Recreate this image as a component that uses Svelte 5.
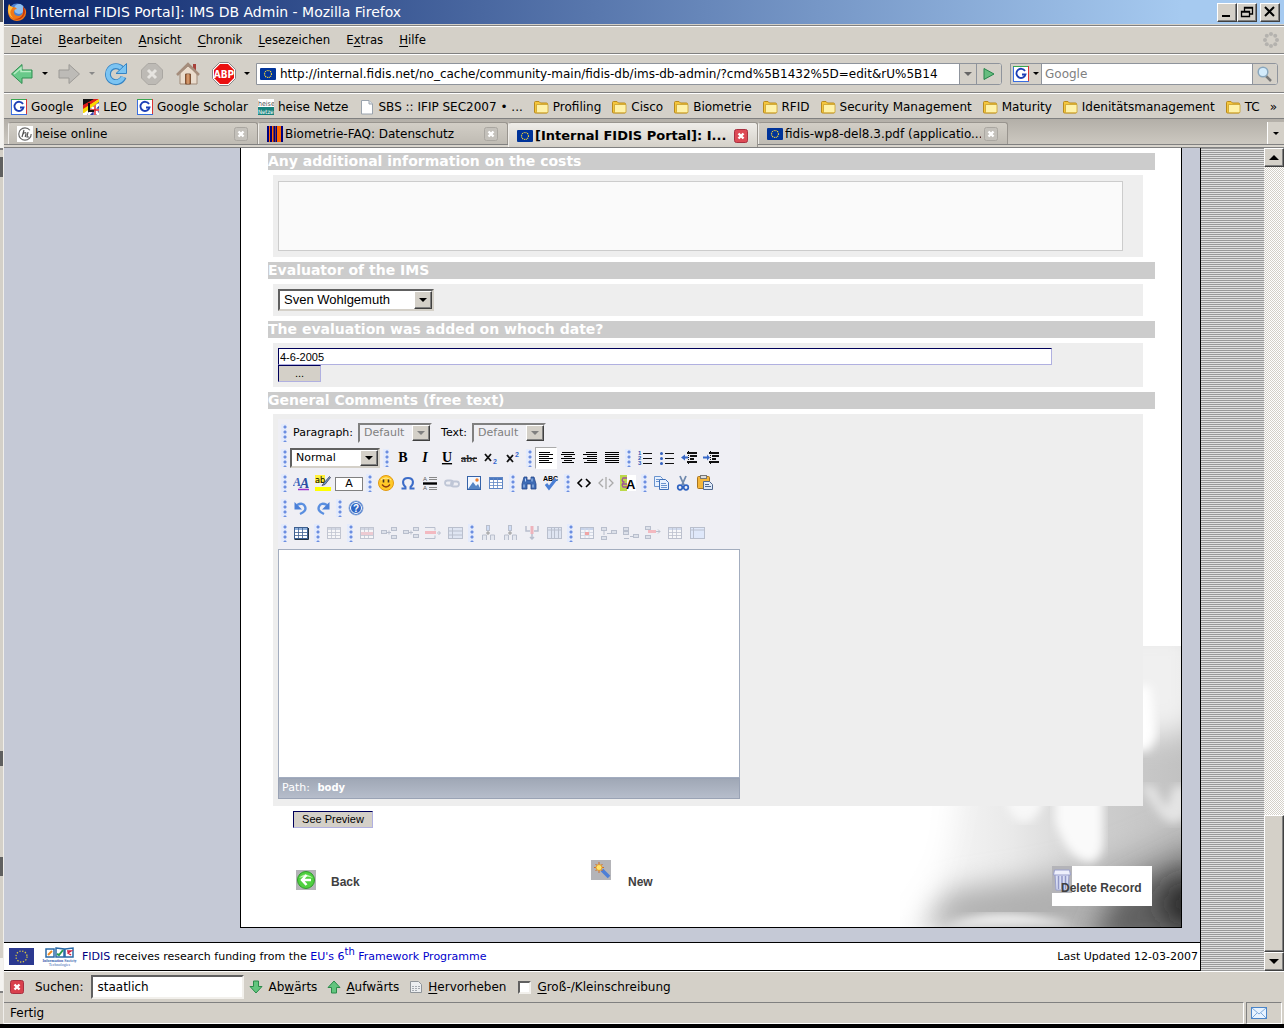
<script>
  const eu = '<rect x="0" y="2" width="16" height="12" rx="1" fill="#003399"/><circle cx="8" cy="8" r="3.5" fill="none" stroke="#ffdd33" stroke-width="1.2" stroke-dasharray="1 0.84"/>';
  const folder = '<path d="M1.500 3.500q0-1 1-1h3.500l1.500 1.500h6q1 0 1 1v8q0 1-1 1h-11q-1 0-1-1z" fill="#f5c63c" stroke="#b98a1b"/><path d="M3.500 5.500h11.500v7.500q0 .8-1 .8h-9.500q-1 0-1-1z" fill="#fff2a8" stroke="#c9a02c" stroke-width=".8"/>';
  const google = '<rect x=".5" y=".5" width="15" height="15" fill="#fff" stroke="#3a6ee0"/><path d="M0 .5h16" stroke="#3aa650"/><path d="M15.500 0v16" stroke="#d33"/><path d="M0 15.500h16" stroke="#3a6ee0"/><path d="M12 5A4.600 4.600 0 1 0 12.500 8.500H9" fill="none" stroke="#1d3fb5" stroke-width="1.800"/>';
  const leo = '<rect width="16" height="16" fill="#fff"/><path d="M8 8l8-6v14H4z" fill="#3340a8"/><path d="M12 3v13M5 11h11M8 7l8 9M16 5L5 16" stroke="#fff" stroke-width="2.600"/><path d="M12 4v12M6 11h10" stroke="#d8202a" stroke-width="1.400"/><path d="M0 0h12L0 7z" fill="#111"/><path d="M0 6L11 0h5L0 11z" fill="#e01b1b"/><path d="M0 10L16 0v3L1 14H0z" fill="#f8d800"/><path d="M6 4v8h5" fill="none" stroke="#111" stroke-width="2"/>';
  const heise = '<rect width="16" height="16" fill="#fff"/><text x="0" y="7" font-size="7" font-family="DejaVu Sans Condensed" fill="#555">heise</text><rect y="8" width="16" height="8" fill="#16827c"/><text x="0" y="15" font-size="6" font-family="DejaVu Sans Condensed" fill="#fff">Netze</text>';
  const page = '<path d="M2.500 1.500h7.500l3.500 3.500v10h-11z" fill="#fff" stroke="#9aa3ad"/><path d="M10 1.500v3.500h3.500" fill="#dfe6ee" stroke="#9aa3ad"/>';
  const atIcon = '<rect width="16" height="16" fill="#fff"/><circle cx="8" cy="8" r="6.200" fill="none" stroke="#666" stroke-width="1.200" stroke-dasharray="34 5"/><path d="M7 4L5 11M6 8q3-3 3 0l-.8 3M11 6l-1 5h2" fill="none" stroke="#555" stroke-width="1.200"/>';
  const bars = '<rect width="16" height="16" fill="#f60"/><path d="M1 0v16M4 0v16M7.500 0v16" stroke="#000080" stroke-width="2"/><path d="M9.500 0v16" stroke="#000080"/><path d="M15 0v16" stroke="#000080" stroke-width="2"/>';
  const close = (a, b) => `<rect x="1.500" y="1.500" width="13" height="13" rx="2" fill="${a}" stroke="${b}"/><path d="M5.500 5.500l5 5m0-5l-5 5" stroke="#fff" stroke-width="2.400"/>`;

  const menus = [['', 'D', 'atei'], ['', 'B', 'earbeiten'], ['', 'A', 'nsicht'], ['', 'C', 'hronik'], ['', 'L', 'esezeichen'], ['E', 'x', 'tras'], ['', 'H', 'ilfe']];
  const bookmarks = [
    [google, 'Google'], [leo, 'LEO'], [google, 'Google Scholar'], [heise, 'heise Netze'], [page, 'SBS :: IFIP SEC2007 • ...'],
    [folder, 'Profiling'], [folder, 'Cisco'], [folder, 'Biometrie'], [folder, 'RFID'], [folder, 'Security Management'],
    [folder, 'Maturity'], [folder, 'Idenitätsmanagement'], [folder, 'TC']
  ];
  const tabs = [
    { icon: atIcon, label: 'heise online' },
    { icon: bars, label: 'Biometrie-FAQ: Datenschutz' },
    { icon: eu, label: '[Internal FIDIS Portal]: I...', active: true },
    { icon: eu, label: 'fidis-wp8-del8.3.pdf (applicatio...' }
  ];

  const lines = (rows) => rows.map(([x1, x2], i) => `M${x1} ${2.5 + i * 2}H${x2}`).join('');
  const L = (rows) => `<path d="${lines(rows)}" stroke="#000"/>`;
  const grid = (stroke, fill, extra = '') => `<rect x="1.500" y="2.500" width="13" height="11" fill="#fff" stroke="${stroke}"/><rect x="2" y="3" width="12" height="2" fill="${fill}"/><path d="M2 7.500h12M2 10.500h12M5.500 3v10M9.500 3v10" stroke="${stroke}" stroke-width=".8"/>${extra}`;
  const T = (t, a) => `<text x="8" y="12" text-anchor="middle" font-family="Liberation Serif, serif" font-weight="bold" font-size="14" ${a}>${t}</text>`;
  const g = '#b9bfcd';
  const cell = (x, y) => `<rect x="${x}.500" y="${y}.500" width="5" height="3" fill="#dde1ea" stroke="${g}"/>`;
  const icons = {
    bold: T('B', ''), italic: T('I', 'font-style="italic"'), underline: T('U', 'text-decoration="underline"'),
    strike: '<text x="8" y="12" text-anchor="middle" font-family="Liberation Serif, serif" font-weight="bold" font-size="11" fill="#333">abc</text><path d="M0 8.500h16" stroke="#222"/>',
    sub: '<path d="M2 4l6 7M8 4l-6 7" stroke="#111" stroke-width="1.800"/><text x="10" y="14" font-size="7" font-weight="bold" font-family="Liberation Sans" fill="#36c">2</text>',
    sup: '<path d="M2 5l6 7M8 5l-6 7" stroke="#111" stroke-width="1.800"/><text x="10" y="7" font-size="7" font-weight="bold" font-family="Liberation Sans" fill="#36c">2</text>',
    left: L([[1, 12], [1, 15], [1, 11], [1, 15], [1, 11], [1, 14]]), center: L([[2, 14], [1, 15], [4, 12], [1, 15], [4, 12], [2, 14]]),
    right: L([[4, 15], [1, 15], [5, 15], [1, 15], [5, 15], [2, 15]]), justify: L([[1, 15], [1, 15], [1, 15], [1, 15], [1, 15], [1, 15]]),
    ol: '<path d="M6 3.500h9M6 8.500h9M6 13.500h9" stroke="#111"/><g font-size="6" font-weight="bold" font-family="Liberation Sans" fill="#2b55b5"><text x="1" y="5">1</text><text x="1" y="10">2</text><text x="1" y="15">3</text></g>',
    ul: '<path d="M6 3.500h9M6 8.500h9M6 13.500h9" stroke="#111"/><g fill="#3461bf"><circle cx="2.500" cy="3.500" r="1.500"/><circle cx="2.500" cy="8.500" r="1.500"/><circle cx="2.500" cy="13.500" r="1.500"/></g>',
    outdent: '<path d="M6 3h10M9 6h7M9 9h4M6 12h10" stroke="#111" stroke-width="2"/><path d="M7.500 1v14" stroke="#111" stroke-dasharray="1 1"/><path d="M0 7.500l4-3v2h3v2H4v2z" fill="#3768c8"/>',
    indent: '<path d="M6 3h10M9 6h7M9 9h4M6 12h10" stroke="#111" stroke-width="2"/><path d="M7.500 1v14" stroke="#111" stroke-dasharray="1 1"/><path d="M7 7.500l-3-3v2H0v2h4v2z" fill="#3768c8"/>',
    color: '<text x="0" y="11" font-size="12" font-style="italic" font-weight="bold" font-family="Liberation Serif" fill="#3a62b8">A</text><text x="7" y="13" font-size="14" font-style="italic" font-weight="bold" font-family="Liberation Serif" fill="#2a4fa3">A</text><path d="M5 14.500h11" stroke="#93c" stroke-width="1.500"/>',
    highlight: '<rect width="10" height="8" fill="#ffef3a"/><text x="0" y="8" font-size="9" font-family="DejaVu Sans Condensed">ab</text><path d="M14.500 1.500l-6 7-1.500 2 3-1 5.500-7z" fill="#6a97d4" stroke="#445" stroke-width=".8"/><rect y="12" width="16" height="4" fill="#ff0"/>',
    smiley: '<circle cx="8" cy="8" r="7.500" fill="#ffc928" stroke="#e39a12"/><path d="M3 5q5-4 10 0" stroke="#fff0a0" fill="none"/><path d="M5.500 4.500v3M10.500 4.500v3" stroke="#432" stroke-width="1.600"/><path d="M4 9.500q4 5 8 0" stroke="#8a3a10" fill="none" stroke-width="1.300"/>',
    omega: '<path d="M1.500 13.500h4v-1.500C2 9 1.800 3 8 3s6 6 2.500 9v1.500h4" fill="none" stroke="#3c6cc8" stroke-width="2"/>',
    hr: '<path d="M1 8.500h14" stroke="#000" stroke-width="2.400"/><path d="M7 2.500h8M7 4.500h8M7 12.500h8M7 14.500h8" stroke="#888"/><g font-size="6" font-family="Liberation Sans" fill="#555"><text x="1" y="6">A</text><text x="1" y="15">A</text></g>',
    link: '<g fill="none" stroke="#bfc6d6" stroke-width="1.800"><rect x="1" y="5.500" width="8" height="5" rx="2.500"/><rect x="7" y="6.500" width="8" height="5" rx="2.500"/></g>',
    image: '<rect x="1.500" y="1.500" width="13" height="13" fill="#f2f7ff" stroke="#3562a8"/><path d="M2 14L7 7l3 4 2-2 2.500 5z" fill="#5585c4"/><circle cx="11" cy="5" r="1.700" fill="#f08030"/>',
    table: grid('#5f86c4', '#4b78c0'), tableOn: grid('#3d6090', '#8fb1dd', '<path d="M1.500 14.500h14V3" fill="none" stroke="#234"/>'), tableOff: `<g opacity=".45">${grid('#8a93a8', '#b0bbd0')}</g>`,
    find: '<path d="M3 2h3v3h4V2h3l2 7v5h-5V9H6v5H1V9z" fill="#3d6bb5" stroke="#27488a" stroke-width=".8"/><path d="M3 9.500v3M12 9.500v3M4.500 3.500v3M11 3.500v3" stroke="#b9d3f6"/>',
    spell: '<text x="0" y="6" font-size="7" font-weight="bold" font-family="Liberation Sans">ABC</text><path d="M3 9l3 4 7-9" fill="none" stroke="#4a7fd6" stroke-width="3"/>',
    code: '<path d="M6 4L2 8l4 4M10 4l4 4-4 4" fill="none" stroke="#000" stroke-width="1.600"/>',
    codeOff: '<path d="M5 4L1 8l4 4M11 4l4 4-4 4M8 2v12" fill="none" stroke="#aaa" stroke-width="1.300"/>',
    style: '<rect width="7" height="16" fill="#bcd94a"/><rect x="7" width="9" height="16" fill="#fff"/><text x="6" y="14" font-size="13" font-weight="bold" font-family="Liberation Sans">A</text><path d="M7 3H3q-2 3 1 4-3 2-1 5h4M2 9h5" fill="none" stroke="#a0529a" stroke-width="1.300"/>',
    copy: '<path d="M1.500 1.500h6l2 2v8h-8z" fill="#e8f1fe" stroke="#6a94cf"/><path d="M6.500 4.500h6l3 3v7h-9z" fill="#e8f1fe" stroke="#3f70b8"/><path d="M3 4.500h3M3 6.500h3M8 8.500h5M8 10.500h6M8 12.500h6" stroke="#6a94cf"/>',
    cut: '<path d="M5 1l4 9M11 1L7 10" stroke="#6f89ad" stroke-width="1.800"/><circle cx="5" cy="12.500" r="2.300" fill="none" stroke="#2e62c0" stroke-width="1.700"/><circle cx="11" cy="12.500" r="2.300" fill="none" stroke="#2e62c0" stroke-width="1.700"/>',
    paste: '<rect x=".5" y="1.500" width="12" height="12" rx="1" fill="#f4b63a" stroke="#a87420"/><rect x="3.500" y=".5" width="6" height="3" fill="#ddd" stroke="#777"/><path d="M6.500 6.500h6l3 3v5h-9z" fill="#dfe9f8" stroke="#50688f"/><path d="M8 9.500h4M8 11.500h6" stroke="#50688f"/>',
    undo: '<path d="M7 14q7-3 5-7.500T4 5" fill="none" stroke="#5a8fe0" stroke-width="2.400"/><path d="M1.500 2v7.500H9z" fill="#4a80d8"/>',
    redo: '<path d="M9 14Q2 11 4 6.500t8-1.500" fill="none" stroke="#5a8fe0" stroke-width="2.400"/><path d="M14.500 2v7.500H7z" fill="#4a80d8"/>',
    help: '<circle cx="8" cy="8" r="7" fill="#2f66c4" stroke="#88a8dc"/><circle cx="8" cy="8" r="5.500" fill="none" stroke="#fff"/><text x="8" y="12" text-anchor="middle" font-size="10" font-weight="bold" font-family="Liberation Sans" fill="#fff">?</text>',
    rowProps: `<g opacity=".45">${grid('#8a93a8', '#b0bbd0')}<rect x="2" y="7" width="12" height="3" fill="#eba0aa"/></g>`,
    rowBefore: cell(0, 5) + cell(10, 2) + cell(10, 10) + `<path d="M6 7.500h4M8 5.500v4" stroke="${g}"/>`,
    rowAfter: cell(0, 5) + cell(10, 2) + cell(10, 9) + `<path d="M6 7.500h4M8 5.500v4" stroke="${g}"/>`,
    rowDel: `<path d="M0 2.500h10v3M0 13.500h10v-3M12 8h3M13.500 6l2 2-2 2" fill="none" stroke="${g}"/><rect y="6" width="11" height="3" fill="#f3b9c0"/>`,
    split: `<rect x="1.500" y="2.500" width="14" height="11" fill="#dfe5f2" stroke="${g}"/><path d="M2 6h13M2 10h13M5.500 3v10" stroke="${g}"/>`,
    colBefore: `<rect x="6.500" y="0.500" width="3" height="5" fill="#cfdcf4" stroke="${g}"/><path d="M8 6v4M6 8h4" stroke="#999"/><path d="M2.500 15v-5h4v5M10.500 15v-5h4v5" fill="#e4e7ef" stroke="${g}"/>`,
    colDel: `<path d="M2 1v5h4M14 1v5h-4M8 9v5M6 12l2 2 2-2" fill="none" stroke="${g}" stroke-width="1.500"/><rect x="6.500" y="1" width="3" height="8" fill="#eeb3bb"/>`,
    cols: `<rect x="1.500" y="2.500" width="14" height="11" fill="#dfe5f2" stroke="${g}"/><path d="M2 5h13M5.500 3v10M8.500 3v10M12.500 3v10" stroke="${g}"/>`,
    cellProps: `<rect x="1.500" y="2.500" width="13" height="11" fill="#f4f5fa" stroke="${g}"/><path d="M2 4h12" stroke="#c7d3ea" stroke-width="2"/><path d="M2 7.500h12M2 10.500h12M6 3v10M10 3v10" stroke="#d4d9e4"/><rect x="6" y="7" width="4" height="3" fill="#f0a5a5"/>`,
    cellA: cell(0, 2) + cell(0, 11) + cell(10, 5) + `<path d="M3 6v4M6 8.500h4" stroke="${g}"/>`,
    cellB: cell(0, 2) + cell(0, 6) + cell(10, 9) + `<path d="M1 13.500h5M7 11.500h3" stroke="${g}"/>`,
    cellDel: cell(0, 1) + cell(0, 10) + `<rect x="3" y="5" width="8" height="3" fill="#f3b9c0"/><path d="M11 6.500h4M13 4.500l2 2-2 2" fill="none" stroke="${g}"/>`,
    merge: `<g opacity=".5">${grid('#8a93a8', '#b7c9ea')}</g>`,
    mergeAll: `<rect x="1.500" y="2.500" width="14" height="11" fill="#dfe8fa" stroke="${g}"/><path d="M2 5h13M4.500 3v10" stroke="${g}"/>`
  };

  const row2 = ['|', 'bold', 'italic', 'underline', 'strike', 'sub', 'sup', '|', 'left', 'center', 'right', 'justify', '|', 'ol', 'ul', 'outdent', 'indent'];
  const row3a = ['|', 'color', 'highlight'];
  const row3b = ['|', 'smiley', 'omega', 'hr', 'link', 'image', 'table', '|', 'find', 'spell', '|', 'code', 'codeOff', 'style', '|', 'copy', 'cut', 'paste'];
  const row4 = ['|', 'undo', 'redo', '|', 'help'];
  const row5 = ['|', 'tableOn', '|', 'tableOff', '|', 'rowProps', 'rowBefore', 'rowAfter', 'rowDel', 'split', '|', 'colBefore', 'colBefore', 'colDel', 'cols', '|', 'cellProps', 'cellA', 'cellB', 'cellDel', 'merge', 'mergeAll'];

  let date = $state('4-6-2005');
  let find = $state('staatlich');
</script>

{#snippet icon(body, size = 16)}
  <svg class="icon" width={size} height={size} viewBox="0 0 16 16" aria-hidden="true">{@html body}</svg>
{/snippet}

{#snippet tools(names)}
  {#each names as name}
    {#if name === '|'}
      <span class="handle"></span>
    {:else}
      <button class="tool" class:on={name === 'left'} aria-label={name}>{@render icon(icons[name])}</button>
    {/if}
  {/each}
{/snippet}

{#snippet dropdown(id, value, kind, label, disabled = false)}
  <span class="drop {kind}">
    <select {id} {disabled} aria-label={label}><option>{value}</option></select>
    <span class="drop-arrow"><i></i></span>
  </span>
{/snippet}

<div class="desktop">
  <div class="behind"></div>
  <div class="window">
    <header class="titlebar">
      <svg width="20" height="20" viewBox="0 0 20 20" aria-hidden="true">
        <circle cx="10" cy="10" r="8.500" fill="#4a7fd0" /><circle cx="12" cy="7" r="5" fill="#8fc0f0" />
        <path d="M2 2q1 3 4 3 3 0 4 2-3 0-3 3 0 4 5 4 4-1 4-5l2-3q3 7-2 11-6 4-12 0Q-1 12 2 2z" fill="#f07818" />
        <path d="M2 2q1 3 4 3l-2 3Q2 12 6 16-1 12 2 2z" fill="#ffc040" /><path d="M16 4q4 6 0 11-4 4-9 2 7 0 9-5z" fill="#c8380c" />
      </svg>
      <h1>[Internal FIDIS Portal]: IMS DB Admin - Mozilla Firefox</h1>
      <div class="controls">
        <button aria-label="Minimieren"><svg width="16" height="14" viewBox="0 0 16 14"><path d="M3 11h8" stroke="#000" stroke-width="2" /></svg></button>
        <button aria-label="Wiederherstellen"><svg width="16" height="14" viewBox="0 0 16 14"><path d="M5.500 7V2.500h8V9H11M5 3h9M2.500 6.500h8v5h-8zM2 7h9" fill="none" stroke="#000" stroke-width="1.300" /></svg></button>
        <button class="quit" aria-label="Schließen"><svg width="16" height="14" viewBox="0 0 16 14"><path d="M3 2l9 9M12 2l-9 9" stroke="#000" stroke-width="2" /></svg></button>
      </div>
    </header>

    <nav class="menubar bar">
      {#each menus as [pre, key, rest]}<button>{pre}<u>{key}</u>{rest}</button>{/each}
      <svg class="throbber" width="16" height="16" viewBox="0 0 16 16" aria-hidden="true">
        <g fill="#b4b2ae"><circle cx="8" cy="2" r="2" /><circle cx="12.200" cy="3.800" r="2" /><circle cx="14" cy="8" r="2" /><circle cx="12.200" cy="12.200" r="2" /><circle cx="8" cy="14" r="2" /><circle cx="3.800" cy="12.200" r="2" /><circle cx="2" cy="8" r="2" /><circle cx="3.800" cy="3.800" r="2" /></g>
      </svg>
    </nav>

    <div class="toolbar bar">
      <button aria-label="Zurück"><svg width="24" height="24" viewBox="0 0 24 24"><path d="M1.500 12L12 2.500V8h10v8H12v5.500z" fill="#69c98a" stroke="#2f8f50" /><path d="M4 12l7-6v3.500h10" fill="none" stroke="#b8ecc4" stroke-width="1.500" /></svg></button>
      <i class="caret"></i>
      <button aria-label="Vor"><svg width="24" height="24" viewBox="0 0 24 24"><path d="M22.500 12L12 2.500V8H2v8h10v5.500z" fill="#bdbbb7" stroke="#9c9a96" /></svg></button>
      <i class="caret dim"></i>
      <button aria-label="Neu laden"><svg width="24" height="24" viewBox="0 0 24 24"><path d="M18 7A8 8 0 1 0 19.500 15" fill="none" stroke="#3584c4" stroke-width="6" /><path d="M18 7A8 8 0 1 0 19.200 15" fill="none" stroke="#7cc4f2" stroke-width="4" /><path d="M22.500 1.500v10H12z" fill="#7cc4f2" stroke="#3584c4" /></svg></button>
      <button class="stop" aria-label="Stopp"><svg width="24" height="24" viewBox="0 0 24 24"><path d="M8 1.500h8L22.500 8v8L16 22.500H8L1.500 16V8z" fill="#bdbab5" stroke="#aaa7a2" /><path d="M8 8l8 8m0-8l-8 8" stroke="#e6e4e0" stroke-width="3" /></svg></button>
      <button aria-label="Startseite"><svg width="24" height="24" viewBox="0 0 24 24"><path d="M17 2h3v7h-3z" fill="#a8403a" /><path d="M4 11L12 4l9 7v11H4z" fill="#eadccd" stroke="#a08a78" /><path d="M1 13L12 2l11 11" fill="none" stroke="#a58d7c" stroke-width="2.600" /><path d="M9.500 12h5v10h-5z" fill="#b8764a" stroke="#7d5236" /><path d="M12 12v10" stroke="#e8b58a" /></svg></button>
      <button class="abp" aria-label="Adblock Plus"><svg width="24" height="24" viewBox="0 0 24 24"><path d="M7.500 .5h9l7 7v9l-7 7h-9l-7-7v-9z" fill="#fff" stroke="#888" /><path d="M8 2h8l6 6v8l-6 6H8l-6-6V8z" fill="#ea1010" /><text x="12" y="16" text-anchor="middle" font-size="10" font-weight="bold" font-family="DejaVu Sans Condensed" fill="#fff">ABP</text></svg></button>
      <i class="caret"></i>
      <div class="field url">
        {@render icon(eu)}
        <input aria-label="Adresse" value="http://internal.fidis.net/no_cache/community-main/fidis-db/ims-db-admin/?cmd%5B1432%5D=edit&rU%5B14" />
        <button class="seg narrow" aria-label="Verlauf"><i class="caret grey"></i></button>
        <button class="seg" aria-label="Los"><svg width="14" height="14" viewBox="0 0 14 14"><path d="M2 1.500v11l10-5.500z" fill="#66bd7f" stroke="#26844a" /></svg></button>
      </div>
      <div class="field search">
        <button class="seg engine" aria-label="Suchmaschine">{@render icon(google)}<i class="caret"></i></button>
        <input aria-label="Suche" placeholder="Google" />
        <button class="seg" aria-label="Suchen"><svg width="18" height="18" viewBox="0 0 18 18"><path d="M10 11l5 5" stroke="#777" stroke-width="2.500" /><circle cx="7" cy="7" r="4.800" fill="#d3ebfb" stroke="#8aa7bd" stroke-width="1.500" /></svg></button>
      </div>
    </div>

    <nav class="bookmarks">
      {#each bookmarks as [art, label]}<a href="#bookmark">{@render icon(art)}<span>{label}</span></a>{/each}
      <button aria-label="Weitere Lesezeichen">»</button>
    </nav>

    <div class="tabs">
      {#each tabs as tab}
        <div class="tab" class:active={tab.active}>
          {@render icon(tab.icon)}
          <button class="tab-label">{tab.label}</button>
          <button aria-label="Tab schließen">{@render icon(tab.active ? close('#dd4a55', '#a83040') : close('#c4c1bb', '#aaa7a1'))}</button>
        </div>
      {/each}
      <button class="tab-list" aria-label="Alle Tabs"><i class="caret"></i></button>
    </div>

    <div class="viewport">
      <div class="page">
        <main>
          <svg class="backdrop" width="281" height="281" viewBox="0 0 281 281" aria-hidden="true">
            <defs>
              <linearGradient id="tone" x1="0" y1="0" x2="1" y2="0"><stop offset="0" stop-color="#fdfdfd" /><stop offset=".4" stop-color="#e9e9e9" /><stop offset=".75" stop-color="#ccc" /><stop offset="1" stop-color="#c2c2c2" /></linearGradient>
              <filter id="s5"><feGaussianBlur stdDeviation="5" /></filter>
              <filter id="s12" x="-50%" y="-50%" width="200%" height="200%"><feGaussianBlur stdDeviation="14" /></filter>
            </defs>
            <rect width="281" height="281" fill="url(#tone)" />
            <path d="M180-20h121v95q-60 40-121-20z" fill="#f0f0f0" filter="url(#s12)" />
            <path d="M20 281L50 245l80-12 75-15 96-40v130z" fill="#b0b0b0" filter="url(#s12)" />
            <path d="M190 301l25-55 90-45v100z" fill="#606060" filter="url(#s12)" />
            <ellipse cx="288" cy="258" rx="24" ry="22" fill="#222" filter="url(#s12)" />
            <path d="M-10 120h70L45 210 0 281h-20z" fill="#fff" filter="url(#s12)" />
            <path d="M45 281q50-26 130-2z" fill="#eee" filter="url(#s5)" />
            <path d="M155 150h48v50q-4 18-16 16-20-4-32-40z" fill="#fafafa" filter="url(#s5)" />
            <path d="M105 150h40q-8 28-22 26-14-2-18-26z" fill="#f8f8f8" filter="url(#s5)" />
            <path d="M230 40h20l7 50-8 15h-20z" fill="#fff" filter="url(#s5)" />
            <path d="M240 140h14l12 22 8-22h14v30l-14 8-12-6z" fill="#e4e4e4" filter="url(#s5)" />
          </svg>

          <form onsubmit={(e) => e.preventDefault()}>
            <h2><label for="costs">Any additional information on the costs</label></h2>
            <div class="box costs"><textarea id="costs"></textarea></div>
            <h2><label for="evaluator">Evaluator of the IMS</label></h2>
            <div class="box">{@render dropdown('evaluator', 'Sven Wohlgemuth', 'big', 'Evaluator of the IMS')}</div>
            <h2><label for="date">The evaluation was added on whoch date?</label></h2>
            <div class="box dates">
              <input id="date" class="inset" bind:value={date} />
              <button class="inset pick">...</button>
            </div>
            <h2>General Comments (free text)</h2>
            <div class="box comments">
              <div class="editor">
                <div class="row first">
                  <span class="handle"></span>
                  <label for="para">Paragraph:</label>{@render dropdown('para', 'Default', 'small', 'Paragraph', true)}
                  <label for="text">Text:</label>{@render dropdown('text', 'Default', 'small', 'Text', true)}
                </div>
                <div class="row"><span class="handle"></span>{@render dropdown('format', 'Normal', 'medium', 'Format')}{@render tools(row2)}</div>
                <div class="row">{@render tools(row3a)}<button class="class-btn" aria-label="Klasse">A</button>{@render tools(row3b)}</div>
                <div class="row">{@render tools(row4)}</div>
                <div class="row">{@render tools(row5)}</div>
                <textarea class="canvas" aria-label="General Comments"></textarea>
                <div class="path">Path: <b>body</b></div>
              </div>
            </div>
            <button class="inset preview">See Preview</button>
          </form>

          <div class="actions">
            <a href="#back" class="back">
              <svg width="20" height="20" viewBox="0 0 20 20" aria-hidden="true"><rect width="20" height="20" fill="#b4b4b8" /><circle cx="10" cy="10" r="8.500" fill="#4fd040" stroke="#2f9a2a" /><path d="M3 8q6-7 14 0-7-3-14 0z" fill="#b8f5a8" /><path d="M10.500 5L6 10l4.500 5M6.500 10H15" fill="none" stroke="#fff" stroke-width="2.500" /></svg>
              <span>Back</span>
            </a>
            <a href="#new" class="new">
              <svg width="20" height="20" viewBox="0 0 20 20" aria-hidden="true"><rect width="20" height="20" fill="#b4b4b8" /><path d="M11 10l7 7" stroke="#4d7fd6" stroke-width="3.500" /><path d="M8 2v11M3 7.500h10M4.500 4l7 7M11.500 4l-7 7" stroke="#d06a28" /><circle cx="8" cy="7.500" r="3" fill="#ffe36a" stroke="#e09a30" /></svg>
              <span>New</span>
            </a>
            <a href="#delete" class="delete">
              <svg width="20" height="27" viewBox="0 0 20 27" aria-hidden="true"><rect width="20" height="27" fill="#b4b4b8" /><path d="M3 8h14l-1 16H4z" fill="#dadff5" stroke="#9aa0cc" /><path d="M6.500 10v13M10 10v13M13.500 10v13" stroke="#9298c8" stroke-width="1.500" /><path d="M1.500 9l1-5h15l1 5z" fill="#eef0fc" stroke="#9aa0cc" /></svg>
              <span>Delete Record</span>
            </a>
          </div>
        </main>

        <footer>
          <svg width="25" height="17" viewBox="0 0 25 17" aria-hidden="true"><rect width="25" height="17" fill="#2b3990" /><circle cx="12.500" cy="8.500" r="5.500" fill="none" stroke="#d9c640" stroke-width="1.300" stroke-dasharray="1.300 1.580" /></svg>
          <svg width="39" height="20" viewBox="0 0 39 20" aria-hidden="true"><g fill="#fff" stroke="#2a6aa8" stroke-width="1.500"><path d="M6 2h8v8H6zM16 1l8 1v8h-8zM25 2l8-1v9h-8z" /></g><path d="M8 8l4-4" stroke="#f08a20" stroke-width="2" /><path d="M17 7l2 1 4-5" fill="none" stroke="#2a9a50" stroke-width="2" /><path d="M27 4h4l-3 2 3 2" fill="none" stroke="#d22040" stroke-width="1.500" /><g font-family="Liberation Serif" fill="#3a5fb0" text-anchor="middle"><text x="19.500" y="15" font-size="4" font-weight="bold">Information Society</text><text x="19.500" y="19" font-size="4">Technologies</text></g></svg>
          <p><a class="navy" href="#fidis">FIDIS</a> receives research funding from the <a href="#eu">EU's 6<sup>th</sup> Framework Programme</a></p>
          <span class="updated">Last Updated 12-03-2007</span>
        </footer>
      </div>
      <div class="stripes"></div>
      <div class="scrollbar">
        <button aria-label="Nach oben"><i class="caret flip"></i></button>
        <div class="track"></div>
        <div class="thumb"></div>
        <button aria-label="Nach unten"><i class="caret wide"></i></button>
      </div>
    </div>

    <div class="findbar">
      <button aria-label="Suchleiste schließen">{@render icon(close('#d9404c', '#a83040'))}</button>
      <label for="find">Suchen:</label>
      <input id="find" bind:value={find} />
      <button class="down"><svg width="14" height="14" viewBox="0 0 14 14" aria-hidden="true"><path d="M4.500 1h5v5.500h3.500L7 13 1 6.500h3.500z" fill="#62c57e" stroke="#2b8a4a" /></svg><span>Ab<u>w</u>ärts</span></button>
      <button><svg width="14" height="14" viewBox="0 0 14 14" aria-hidden="true"><path d="M4.500 13h5V7.500h3.500L7 1 1 7.500h3.500z" fill="#62c57e" stroke="#2b8a4a" /></svg><span><u>A</u>ufwärts</span></button>
      <button><svg width="14" height="14" viewBox="0 0 14 14" aria-hidden="true"><path d="M1.500 1.500h8l3 3v8h-11z" fill="#eceef0" stroke="#8f9499" /><path d="M3 6.500h8M3 8.500h8M3 10.500h6" stroke="#a5aab0" stroke-dasharray="2 1" /></svg><span><u>H</u>ervorheben</span></button>
      <label class="case"><input type="checkbox" /><span><u>G</u>roß-/Kleinschreibung</span></label>
    </div>

    <div class="status">
      <span>Fertig</span>
      <div class="mail"><svg width="16" height="12" viewBox="0 0 16 12" aria-hidden="true"><rect x=".5" y=".5" width="15" height="11" fill="#e8f3ff" stroke="#4a84c8" /><path d="M1 1l7 6 7-6M1 11l5-5M15 11l-5-5" fill="none" stroke="#7fabdc" /></svg></div>
    </div>
  </div>
</div>

<style>
  :global(body) { background: #000; }
  .desktop { display: flex; min-height: 100vh; box-sizing: border-box; padding-bottom: 4px; font: 12px/16px "DejaVu Sans", sans-serif; color: #000; background: #000; }
  .behind { width: 3px; flex: none; border-right: 1px solid #f0eeea; background: linear-gradient(#606060 22px, #f4f3f0 22px 148px, #808080 148px 150px, #d4d0c8 150px 157px, #606060 157px 177px, #d4d0c8 177px 751px, #606060 751px 766px, #d4d0c8 766px 857px, #606060 857px 876px, #d4d0c8 876px 958px, #f4f3f0 958px 991px, #808080 991px 993px, #d4d0c8 993px); }
  .window { flex: 1; min-width: 0; display: flex; flex-direction: column; background: #d4d0c8; }
  button { font: inherit; color: inherit; background: none; border: 0; padding: 0; }
  input, textarea, select { font: inherit; color: inherit; box-sizing: border-box; border-radius: 0; outline: 0; }
  a { color: inherit; text-decoration: none; }
  svg { display: block; flex: none; }
  h1, h2, p { margin: 0; }
  .caret { border: 3px solid transparent; border-top-color: #000; border-bottom: 0; display: block; flex: none; }
  .dim { border-top-color: #888; }
  .grey { border-width: 4px 4px 0; border-top-color: #666; }
  .wide { border-width: 5px 5px 0; }
  .flip { border-width: 5px 5px 0; transform: rotate(180deg); }

  .titlebar { display: flex; align-items: center; height: 24px; padding: 0 4px 0 3px; gap: 3px; background: linear-gradient(90deg, #0a246a, #a6caf0 92%); color: #fff; border-bottom: 1px solid #d4d0c8; }
  h1 { flex: 1; font-size: 14px; font-weight: normal; }
  .controls { display: flex; color: #000; }
  .controls button { width: 20px; height: 19px; display: grid; place-items: center; }
  .controls button, .scrollbar button, .thumb { box-sizing: border-box; background: #d4d0c8; border: 1px solid; border-color: #fff #404040 #404040 #fff; box-shadow: inset -1px -1px #808080; }
  .controls .quit { margin-left: 3px; }

  .bar { border-top: 1px solid #fff; border-bottom: 1px solid #808080; display: flex; align-items: center; box-sizing: border-box; }
  .menubar { height: 29px; padding: 0 5px 0 7px; gap: 16px; border-top: 1px solid #808080; box-shadow: inset 0 1px #fff; font: 13px/16px "DejaVu Sans Condensed", "DejaVu Sans", sans-serif; }
  u { text-underline-offset: 2px; }
  .throbber { margin-left: auto; }
  .toolbar { height: 39px; padding: 0 6px; }
  .toolbar > button + .caret { margin: 0 9px 0 8px; }
  .stop { margin: 0 12px; }
  .abp { margin-left: 12px; }
  .toolbar > .abp + .caret { margin-right: 6px; }
  .field { display: flex; align-items: center; height: 22px; box-sizing: border-box; border: 1px solid #8f949c; background: #fff; border-radius: 0 3px 3px 0; overflow: hidden; }
  .field input { flex: 1; min-width: 0; border: 0; background: none; padding: 0 4px; height: 20px; }
  .url { flex: 1; min-width: 0; padding-left: 3px; }
  .search { width: 268px; margin-left: 8px; }
  .search input { padding: 0 3px; }
  .search input::placeholder { color: #808080; opacity: 1; }
  .seg { width: 25px; height: 20px; display: flex; align-items: center; justify-content: center; background: #d4d0c8; border-left: 1px solid #8f949c; }
  .narrow { width: 17px; }
  .engine { width: 31px; gap: 4px; border-left: 0; border-right: 1px solid #8f949c; }

  .bookmarks { display: flex; align-items: center; height: 25px; box-sizing: border-box; border-top: 1px solid #fff; padding: 1px 8px 0 7px; gap: 10px; white-space: nowrap; }
  .bookmarks a { display: flex; align-items: center; gap: 4px; }
  .bookmarks button { margin-left: auto; }

  .tabs { display: flex; height: 30px; box-sizing: border-box; padding: 3px 0 0 4px; border-top: 1px solid #808080; border-bottom: 1px solid #808080; background: linear-gradient(#b3afa8, #ccc8c0 25px, #808080 25px 26px, #d8d4cc 26px); }
  .tab { flex: 0 1 250px; box-sizing: border-box; min-width: 0; height: 22px; display: flex; align-items: center; gap: 2px; padding: 1px 8px 0; border: 1px solid #99958f; border-left-color: #f0eeea; border-bottom: 0; border-radius: 3px 3px 0 0; background: linear-gradient(#d2cec6, #bfbbb3); }
  .tab.active { height: 25px; background: linear-gradient(#efede9, #d4d0c8); font-weight: bold; font-size: 13px; }
  .tab-label { flex: 1; min-width: 0; text-align: left; white-space: nowrap; overflow: hidden; }
  .tab-list { margin-left: auto; width: 17px; height: 22px; border-left: 1px solid #fff; display: grid; place-items: center; background: #d4d0c8; }

  .viewport { flex: 1; display: flex; background: #c5c9d6; }
  .page { width: calc(100% - 83px); box-sizing: border-box; border-right: 1px solid #000; display: flex; flex-direction: column; }
  main { position: relative; z-index: 0; flex: 1; margin: 0 18px 14px 236px; padding: 5px 26px 20px 27px; background: #fff; border: 1px solid #000; border-top: 0; }
  .backdrop { position: absolute; right: 0; bottom: 0; z-index: -1; }
  h2 { font-size: 14px; line-height: 17px; color: #fff; background: #ccc; }
  .box { margin: 5px 12px 5px 5px; padding: 5px; background: #eee; }
  .costs { padding: 6px 20px 6px 5px; }
  .costs textarea { display: block; width: 100%; height: 70px; background: #fafafa; border: 1px solid #ccc; resize: none; }
  .drop { position: relative; display: block; flex: none; font-family: "Liberation Sans", sans-serif; }
  .drop select { appearance: none; width: 100%; height: 100%; display: block; background: #fff; border: 2px solid; border-color: #606060 #d4d0c8 #d4d0c8 #606060; padding: 0 4px; opacity: 1; }
  .drop-arrow { position: absolute; right: 2px; top: 2px; bottom: 2px; width: 18px; display: grid; place-items: center; box-sizing: border-box; background: #d4d0c8; border: 1px solid; border-color: #fff #404040 #404040 #fff; box-shadow: inset -1px -1px #808080; pointer-events: none; }
  .drop-arrow i { border: 4px solid transparent; border-top-color: #000; border-bottom: 0; }
  .big { width: 156px; height: 22px; font-size: 13px; }
  .medium { width: 90px; height: 20px; font: 11px "DejaVu Sans", sans-serif; }
  .small { width: 74px; height: 20px; font: 11px "DejaVu Sans", sans-serif; color: #808080; }
  .small select { background: #efeff4; border-color: #808080 #efeff4 #efeff4 #808080; }
  .small .drop-arrow i { border-top-color: #808080; }
  .inset { border: 1px solid; border-color: #00005a #b0b0e0 #b0b0e0 #00005a; font: 11px/15px "Liberation Sans", sans-serif; }
  .dates .inset { display: block; height: 17px; padding: 0 1px; }
  .dates input { width: 90%; background: #fff; }
  .dates .pick { width: 43px; background: #d4d0c8; }
  .comments { padding-bottom: 7px; }
  .editor { width: 462px; background: #efeff4; }
  .row { display: flex; align-items: center; height: 25px; padding: 0 1px; }
  .row.first { padding-top: 1px; }
  .first label { font-size: 11px; margin: 0 5px 0 3px; }
  .first .drop + label { margin-left: 9px; }
  .handle { width: 11px; height: 18px; flex: none; background: radial-gradient(circle at 4px 2px, #6c8ee0 1px, transparent 2px) 0 1px / 11px 5px, #e4ebfc; background-clip: padding-box; border-left: 2px solid #efeff4; border-right: 3px solid #efeff4; box-sizing: border-box; }
  .tool { width: 22px; height: 22px; flex: none; display: grid; place-items: center; }
  .on { background: #fff; border: 1px solid; border-color: #aaa #fff #fff #aaa; }
  .class-btn { width: 28px; height: 14px; margin: 2px 1px 0; font: 11px/12px "DejaVu Sans", sans-serif; background: #fff; border: 1px solid #808080; }
  .medium + .handle { margin-left: 1px; }
  .canvas { display: block; width: 100%; height: 229px; margin-top: 4px; background: #fff; border: 1px solid #a3adbf; resize: none; }
  .path { height: 21px; box-sizing: border-box; border: 1px solid #9aa3b5; background: linear-gradient(#a0a8b6, #b6bdcb); color: #fff; font-size: 11px; line-height: 18px; padding: 0 3px; white-space: pre; }
  .path b { margin-left: 4px; font-size: 10px; }
  .preview { display: block; margin-left: 25px; width: 80px; height: 17px; background: #d4d0c8; }
  .actions { display: grid; grid-template-columns: 295px 1fr auto; align-items: start; margin-top: 32px; padding: 0 3px 0 28px; font: bold 12px/16px "Liberation Sans", sans-serif; color: #404040; }
  .back { display: flex; gap: 15px; margin-top: 10px; }
  .back span { margin-top: 4px; }
  .new { display: flex; gap: 17px; }
  .new span { margin-top: 14px; }
  .delete { position: relative; width: 100px; height: 40px; margin-top: 6px; background: #fff; }
  .delete span { position: absolute; left: 9px; top: 14px; white-space: nowrap; }
  footer { display: flex; align-items: center; gap: 6px; height: 29px; box-sizing: border-box; border-top: 1px solid #000; border-bottom: 1px solid #000; background: #fff; padding: 0 2px 0 5px; font-size: 11px; line-height: 14px; }
  footer p { margin-left: -3px; }
  footer a { color: #0000cc; }
  footer .navy { color: #000080; }
  sup { font-size: 10px; line-height: 0; }
  .updated { margin-left: auto; }
  .stripes { flex: 1; background: repeating-linear-gradient(#999 0 1px, #e0e0e0 1px 2px); }
  .scrollbar { width: 20px; flex: none; display: flex; flex-direction: column; background: repeating-conic-gradient(#fff 0 25%, #d4d0c8 0 50%) 0 0 / 2px 2px; }
  .scrollbar button { height: 19px; display: grid; place-items: center; }
  .track { flex: 649; }
  .thumb { flex: 135; }

  .findbar { display: flex; align-items: center; height: 31px; box-sizing: border-box; border-top: 1px solid #fff; padding: 0 5px; }
  .findbar label[for] { margin: 0 8px 0 10px; }
  .findbar > input { width: 153px; height: 24px; padding: 0 4px; background: #fff; border: 2px solid; border-color: #606060 #f2f0ec #f2f0ec #606060; }
  .findbar button { display: flex; align-items: center; gap: 5px; margin-right: 10px; }
  .findbar button:first-child { margin-right: 0; }
  .findbar .down { margin-left: 5px; }
  .case { display: flex; align-items: center; gap: 6px; margin-left: 2px; }
  .case input { appearance: none; width: 13px; height: 13px; margin: 0; background: #fff; border: 2px solid; border-color: #606060 #f2f0ec #f2f0ec #606060; }
  .status { display: flex; height: 22px; box-sizing: border-box; }
  .status span { flex: 1; border-top: 1px solid #808080; border-bottom: 1px solid #fff; border-right: 1px solid #fff; padding: 2px 6px; }
  .mail { width: 36px; box-sizing: border-box; margin: 0 2px; padding: 4px; border: 1px solid; border-color: #808080 #fff #fff #808080; }
</style>
